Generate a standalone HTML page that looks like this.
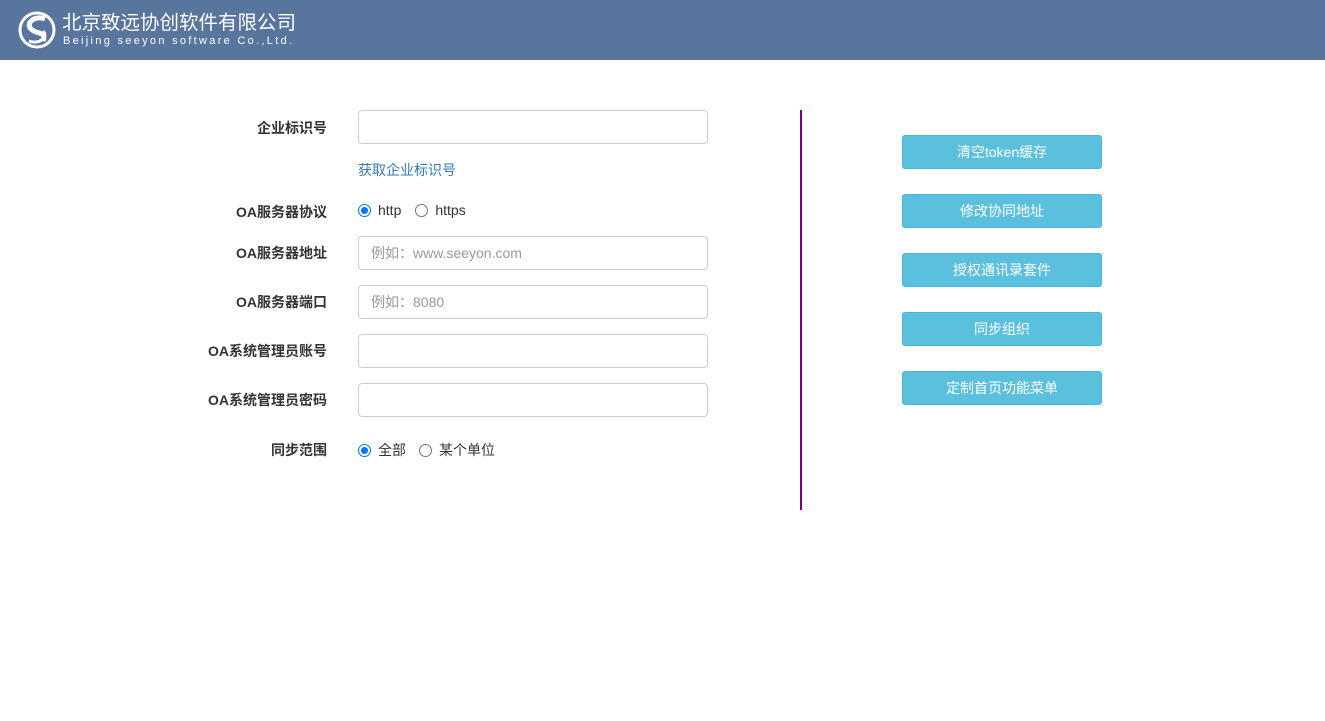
<!DOCTYPE html>
<html><head><meta charset="utf-8"><style>
*{margin:0;padding:0;box-sizing:border-box}
body{width:1325px;height:721px;background:#fff;font-family:"Liberation Sans","Noto Sans CJK SC",sans-serif;font-size:14px;color:#333;position:relative;overflow:hidden}
.hd{position:absolute;left:0;top:0;width:1325px;height:60px;background:#58759e}
.t1{position:absolute;left:62px;top:12px;color:#fff;font-size:19.5px;line-height:22px;letter-spacing:0px}
.t2{position:absolute;left:63px;top:35px;color:#fff;font-size:11px;letter-spacing:2.3px;line-height:12px}
.lbl{position:absolute;right:998px;font-weight:bold;font-size:14px;color:#333;text-align:right;white-space:nowrap}
.inp{position:absolute;left:358px;width:350px;height:34px;border:1px solid #ccc;border-radius:4px;padding-left:12px;line-height:32px;color:#999;font-size:14px}
.radio{position:absolute;left:358px;font-size:14px;color:#333;display:flex;align-items:center}
.r{width:13px;height:13px;border-radius:50%;border:1px solid #767676;display:inline-block;margin-right:7px;position:relative}
.r.on{border:1px solid #0075ff}
.r.on:after{content:"";position:absolute;left:2px;top:2px;width:7px;height:7px;border-radius:50%;background:#0075ff}
.vl{position:absolute;left:800px;top:110px;width:2px;height:400px;background:#800080}
.btn{position:absolute;left:902px;width:200px;height:34px;background:#5bc0de;border:1px solid #46b8da;border-radius:3px;color:#fff;text-align:center;line-height:32px;font-size:14px}
</style></head><body>
<div class="hd">
<svg style="position:absolute;left:17px;top:11px" width="40" height="38" viewBox="0 0 40 38">
<circle cx="20" cy="19" r="17" fill="none" stroke="#fff" stroke-width="3"/>
<path d="M28 8 C18 4 8 12 14 18 C20 24 30 20 26 30" fill="none" stroke="#fff" stroke-width="5"/>
<path d="M12 30 C22 34 32 26 26 20" fill="none" stroke="#fff" stroke-width="3"/>
</svg>
<div class="t1">北京致远协创软件有限公司</div>
<div class="t2">Beijing seeyon software Co.,Ltd.</div>
</div>
<div class="lbl" style="top:118px">企业标识号</div>
<div class="inp" style="top:110px"></div>
<div style="position:absolute;left:358px;top:160px;color:#337ab7">获取企业标识号</div>
<div class="lbl" style="top:202px">OA服务器协议</div>
<div class="radio" style="top:202px"><span class="r on"></span>http<span class="r" style="margin-left:14px"></span>https</div>
<div class="lbl" style="top:243px">OA服务器地址</div>
<div class="inp" style="top:236px">例如：www.seeyon.com</div>
<div class="lbl" style="top:292px">OA服务器端口</div>
<div class="inp" style="top:285px">例如：8080</div>
<div class="lbl" style="top:341px">OA系统管理员账号</div>
<div class="inp" style="top:334px"></div>
<div class="lbl" style="top:390px">OA系统管理员密码</div>
<div class="inp" style="top:383px"></div>
<div class="lbl" style="top:440px">同步范围</div>
<div class="radio" style="top:440px"><span class="r on"></span>全部<span class="r" style="margin-left:13px"></span>某个单位</div>
<div class="vl"></div>
<div class="btn" style="top:135px">清空token缓存</div>
<div class="btn" style="top:194px">修改协同地址</div>
<div class="btn" style="top:253px">授权通讯录套件</div>
<div class="btn" style="top:312px">同步组织</div>
<div class="btn" style="top:371px">定制首页功能菜单</div>
</body></html>
